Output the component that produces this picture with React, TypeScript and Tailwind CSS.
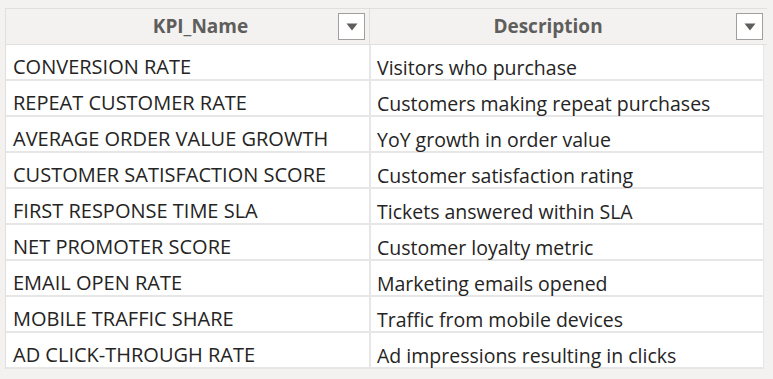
const ROWS: [string, string][] = [
  ["CONVERSION RATE", "Visitors who purchase"],
  ["REPEAT CUSTOMER RATE", "Customers making repeat purchases"],
  ["AVERAGE ORDER VALUE GROWTH", "YoY growth in order value"],
  ["CUSTOMER SATISFACTION SCORE", "Customer satisfaction rating"],
  ["FIRST RESPONSE TIME SLA", "Tickets answered within SLA"],
  ["NET PROMOTER SCORE", "Customer loyalty metric"],
  ["EMAIL OPEN RATE", "Marketing emails opened"],
  ["MOBILE TRAFFIC SHARE", "Traffic from mobile devices"],
  ["AD CLICK-THROUGH RATE", "Ad impressions resulting in clicks"],
];

function FilterButton() {
  return (
    <div className="w-[27px] h-[27px] shrink-0 bg-white border border-[#a19f9d] flex items-center justify-center">
      <svg width="12" height="8" viewBox="0 0 12 8" aria-hidden>
        <path d="M0.5 0.5H11.5L6 7.5Z" fill="#605e5c" />
      </svg>
    </div>
  );
}

function HeaderCell({ label, pad }: { label: string; pad: string }) {
  return (
    <div className="h-[35px] flex items-center pr-[4px] bg-[#f3f2f1]">
      <div className={`flex-1 text-center font-bold text-[19px] text-[#605e5c] ${pad}`}>{label}</div>
      <FilterButton />
    </div>
  );
}

export default function App() {
  return (
    <div
      className="w-[773px] h-[379px] bg-[#f3f2f1] overflow-hidden pt-[8px] pl-[5px]"
      style={{ fontFamily: '"Open Sans", "Noto Sans", sans-serif' }}
    >
      <div className="w-[762px] border-t border-l border-[#e1dfdd]">
        <div className="grid grid-cols-[363px_397px] gap-x-[1px] bg-[#e1dfdd] border-b border-[#e1dfdd] pr-[1px]">
          <HeaderCell label="KPI_Name" pad="pl-[57px]" />
          <HeaderCell label="Description" pad="pr-[10px]" />
        </div>
        <div className="w-[758px] border-r-[3px] border-[#e6e6e6]">
          {ROWS.map(([name, desc]) => (
            <div
              key={name}
              className="grid grid-cols-[363px_392px] gap-x-[2px] bg-[#e6e6e6] pb-[2px]"
            >
              <div className="h-[34px] bg-white flex items-end pb-[2px] pl-[7px] text-[20px] leading-none text-[#252423] whitespace-nowrap">
                {name}
              </div>
              <div className="h-[34px] bg-white flex items-end pb-[2px] pl-[6px] text-[19.5px] leading-none text-[#252423] whitespace-nowrap">
                {desc}
              </div>
            </div>
          ))}
        </div>
      </div>
    </div>
  );
}
